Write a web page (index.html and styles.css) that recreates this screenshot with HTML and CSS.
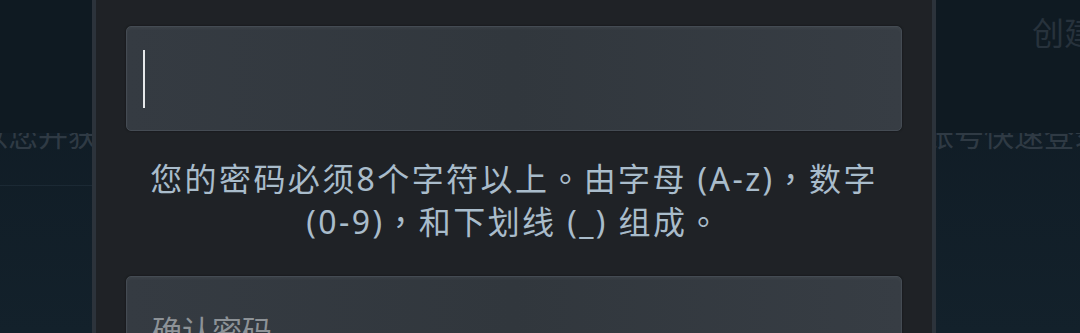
FILE: index.html
```html
<!DOCTYPE html>
<html lang="zh-CN">
<head>
    <meta charset="UTF-8">
    <meta name="viewport" content="width=device-width, initial-scale=1.0">
    <title>创建账户</title>
    <link rel="stylesheet" href="styles.css">
</head>
<body>
    <div class="page">
        <!-- Page behind the dialog (left) -->
        <div class="bg-side bg-left">
            <div class="bg-top"></div>
            <div class="bg-line-wrap">
                <div class="bg-text">创建账户以您并获</div>
            </div>
            <div class="bg-rule"></div>
        </div>

        <!-- Dialog -->
        <div class="modal">
            <div class="field">
                <span class="caret"></span>
            </div>
            <p class="hint" lang="zh-TW">您的密码必须8个字符以上。由字母 (A-z)，数字 <span class="nowrap">(0-9)，</span>和下划线 (_) 组成。</p>
            <div class="field">
                <span class="placeholder">确认密码</span>
            </div>
        </div>

        <!-- Page behind the dialog (right) -->
        <div class="bg-side bg-right">
            <div class="bg-top">
                <div class="bg-title">创建账户</div>
            </div>
            <div class="bg-line-wrap">
                <div class="bg-text">账号快速登录</div>
            </div>
        </div>
    </div>
</body>
</html>
```

FILE: styles.css
```css
* {
    box-sizing: border-box;
}

body {
    margin: 0;
    background-color: #121f29;
    font-family: "Noto Sans", "Noto Sans CJK TC", sans-serif;
    overflow: hidden;
}

.page {
    display: flex;
    height: 333px;
    overflow: hidden;
}

.bg-side {
    display: flex;
    flex-direction: column;
    overflow: hidden;
    background: linear-gradient(to bottom, #0f1a23 0%, #13212b 100%);
}

.bg-left {
    width: 92px;
    flex: none;
    align-items: flex-end;
}

.bg-right {
    flex: 1;
    align-items: flex-start;
}

.bg-top {
    height: 133px;
    width: 100%;
    flex: none;
    background-color: #0f1a22;
}

.bg-title {
    font-size: 32px;
    color: #27323c;
    white-space: nowrap;
    padding: 8px 0 0 96px;
}

.bg-line-wrap {
    height: 18px;
    flex: none;
    overflow: hidden;
}

.bg-text {
    font-size: 30px;
    line-height: 30px;
    color: #2f3a44;
    white-space: nowrap;
    margin-top: -13px;
}

.bg-left .bg-text {
    margin-right: -6px;
}

.bg-right .bg-text {
    margin-left: -12px;
}

.bg-rule {
    margin-top: 34px;
    width: 100%;
    height: 1px;
    background-color: #1b2934;
}

.modal {
    width: 844px;
    flex: none;
    background-color: #1f2226;
    border-left: 4px solid #2c333b;
    border-right: 4px solid #2c333b;
    padding: 26px 30px 0;
}

.field {
    height: 105px;
    flex: none;
    border: 1px solid #444b53;
    border-radius: 5px;
    background: linear-gradient(to right, #353b42 0%, #31373d 50%, #373d44 100%);
    box-shadow: inset 0 2px 3px rgba(255, 255, 255, 0.04), 0 0 2px rgba(0, 0, 0, 0.6);
    display: flex;
    align-items: center;
}

.caret {
    width: 2px;
    height: 58px;
    margin-left: 16px;
    background-color: #e6e8ea;
}

.placeholder {
    margin-left: 25px;
    font-size: 30px;
    color: #8d9297;
}

.hint {
    margin: 26px auto 33px;
    text-align: center;
    font-size: 32px;
    letter-spacing: 2.4px;
    line-height: 43px;
    color: #a9bccb;
}

.nowrap {
    white-space: nowrap;
}
```
